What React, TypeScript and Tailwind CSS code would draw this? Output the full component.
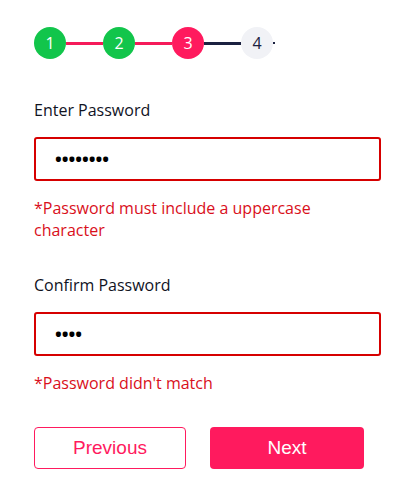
const steps = [
  { n: 1, circle: 'bg-[#12c54b] text-white', line: 'bg-[#f51b5a]' },
  { n: 2, circle: 'bg-[#12c54b] text-white', line: 'bg-[#f51b5a]' },
  { n: 3, circle: 'bg-[#ff1a5e] text-white', line: 'bg-[#1b2140]' },
  { n: 4, circle: 'bg-[#f1f2f6] text-[#1b2140]', line: '' },
]

function Stepper() {
  return (
    <div className="flex items-center">
      {steps.map((s) => (
        <div key={s.n} className="flex items-center">
          <div
            className={`flex h-[32px] w-[32px] items-center justify-center rounded-full text-[16px] ${s.circle}`}
          >
            {s.n}
          </div>
          {s.line ? (
            <div className={`h-[3px] w-[37px] ${s.line}`} />
          ) : (
            <div className="h-[2px] w-[2px] bg-[#1b2140]" />
          )}
        </div>
      ))}
    </div>
  )
}

function Field({
  label,
  value,
  error,
}: {
  label: string
  value: string
  error: string
}) {
  return (
    <div>
      <label className="block text-[16px] leading-[24px] text-[#10131f]">
        {label}
      </label>
      <input
        type="password"
        readOnly
        value={value}
        className="mt-[15px] block h-[44px] w-full rounded-[3px] border-2 border-[#d60000] px-[19px] text-[18px] font-bold text-black outline-none"
      />
      <p className="mt-[16px] text-[16px] leading-[22px] text-[#d90f1b]">
        {error}
      </p>
    </div>
  )
}

export default function App() {
  return (
    <div
      className="w-[418px] bg-white pl-[34px] pt-[27px]"
      style={{ fontFamily: '"Open Sans", "Noto Sans", sans-serif' }}
    >
      <Stepper />
      <div className="mt-[39px] w-[347px]">
        <Field
          label="Enter Password"
          value="12345678"
          error="*Password must include a uppercase character"
        />
        <div className="mt-[32px]">
          <Field
            label="Confirm Password"
            value="1234"
            error="*Password didn't match"
          />
        </div>
        <div
          className="mt-[33px] flex gap-[24px]"
          style={{ fontFamily: '"Liberation Sans", Arial, sans-serif' }}
        >
          <button className="h-[42px] w-[152px] rounded-[4px] border border-[#ff1a5e] bg-white text-[19px] text-[#ff1a5e]">
            Previous
          </button>
          <button className="h-[42px] w-[154px] rounded-[4px] bg-[#ff1a5e] text-[19px] text-white">
            Next
          </button>
        </div>
      </div>
    </div>
  )
}
